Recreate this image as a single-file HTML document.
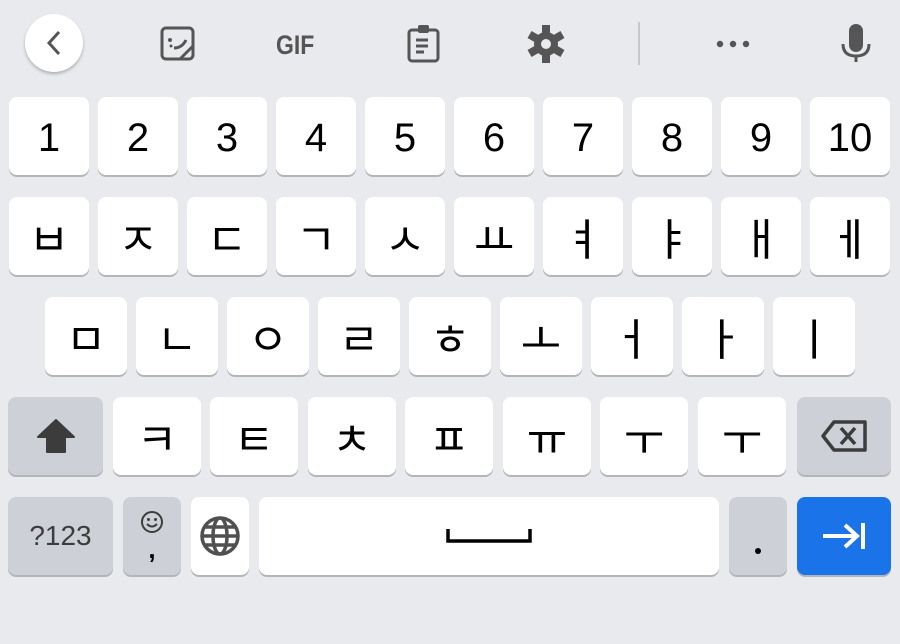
<!DOCTYPE html>
<html><head><meta charset="utf-8"><style>
body{margin:0;width:900px;height:644px;background:#e8eaed;position:relative;overflow:hidden;font-family:"Liberation Sans","Noto Sans CJK KR",sans-serif}
.k{position:absolute;background:#fff;border-radius:8px;box-shadow:0 2px 0 #b3b5ba;display:flex;align-items:center;justify-content:center;color:#000;height:78px}
.g{background:#cdd0d6}
.n{font-size:40px;top:97px;width:80px;padding-top:5px;box-sizing:border-box}
.h{font-size:44px;font-family:"Noto Sans CJK KR",sans-serif}
.ic{position:absolute}
</style></head><body>
<div class="ic" style="left:25px;top:14px;width:58px;height:58px;border-radius:50%;background:#fff;box-shadow:0 2px 3px rgba(0,0,0,.25)"></div>
<svg class="ic" style="left:0;top:0" width="900" height="90">
<path d="M59 32 L49 43 L59 54" fill="none" stroke="#555" stroke-width="3"/>
<rect x="162" y="28" width="31" height="31" rx="4" fill="none" stroke="#555" stroke-width="3"/>
<path d="M180 59 L193 46" stroke="#555" stroke-width="3"/>
<circle cx="170" cy="40" r="2" fill="#555"/><circle cx="171" cy="46" r="1.5" fill="#555"/>
<path d="M174 48 Q182 48 186 40" fill="none" stroke="#555" stroke-width="3"/>
<text x="0" y="0" transform="translate(276,54) scale(0.85,1)" font-family="Liberation Sans" font-weight="bold" font-size="27" fill="#555">GIF</text>
<rect x="409" y="30" width="29" height="31" rx="3" fill="none" stroke="#555" stroke-width="3"/>
<rect x="418" y="25" width="11" height="8" rx="2" fill="#555"/>
<path d="M416 40h12M416 46h12M416 52h8" stroke="#555" stroke-width="3"/>
<g transform="translate(546,44)" fill="#555"><circle r="12"/>
<rect x="-4" y="-19" width="8" height="38"/><rect x="-4" y="-19" width="8" height="38" transform="rotate(60)"/><rect x="-4" y="-19" width="8" height="38" transform="rotate(120)"/>
<circle r="5" fill="#e8eaed"/></g>
<line x1="639" y1="22" x2="639" y2="65" stroke="#c5c7cb" stroke-width="2"/>
<circle cx="720" cy="44" r="3.2" fill="#555"/><circle cx="733" cy="44" r="3.2" fill="#555"/><circle cx="746" cy="44" r="3.2" fill="#555"/>
<rect x="849" y="24" width="14" height="28" rx="7" fill="#555"/>
<path d="M843 44 Q843 56 856 56 Q869 56 869 44 M856 56 V62" fill="none" stroke="#555" stroke-width="3"/>
</svg>
<div class="k n" style="left:9px">1</div><div class="k n" style="left:98px">2</div><div class="k n" style="left:187px">3</div><div class="k n" style="left:276px">4</div><div class="k n" style="left:365px">5</div><div class="k n" style="left:454px">6</div><div class="k n" style="left:543px">7</div><div class="k n" style="left:632px">8</div><div class="k n" style="left:721px">9</div><div class="k n" style="left:810px">10</div>
<div class="k h" style="top:197px;left:9px;width:80px">ㅂ</div><div class="k h" style="top:197px;left:98px;width:80px">ㅈ</div><div class="k h" style="top:197px;left:187px;width:80px">ㄷ</div><div class="k h" style="top:197px;left:276px;width:80px">ㄱ</div><div class="k h" style="top:197px;left:365px;width:80px">ㅅ</div><div class="k h" style="top:197px;left:454px;width:80px">ㅛ</div><div class="k h" style="top:197px;left:543px;width:80px">ㅕ</div><div class="k h" style="top:197px;left:632px;width:80px">ㅑ</div><div class="k h" style="top:197px;left:721px;width:80px">ㅐ</div><div class="k h" style="top:197px;left:810px;width:80px">ㅔ</div>
<div class="k h" style="top:297px;left:45px;width:82px">ㅁ</div><div class="k h" style="top:297px;left:136px;width:82px">ㄴ</div><div class="k h" style="top:297px;left:227px;width:82px">ㅇ</div><div class="k h" style="top:297px;left:318px;width:82px">ㄹ</div><div class="k h" style="top:297px;left:409px;width:82px">ㅎ</div><div class="k h" style="top:297px;left:500px;width:82px">ㅗ</div><div class="k h" style="top:297px;left:591px;width:82px">ㅓ</div><div class="k h" style="top:297px;left:682px;width:82px">ㅏ</div><div class="k h" style="top:297px;left:773px;width:82px">ㅣ</div>
<div class="k g" style="top:397px;left:8px;width:95px"><svg width="40" height="40" viewBox="0 0 40 40"><path d="M20 4 L38 21 H29 V36 H11 V21 H2 Z" fill="#3c3c3c" stroke="#3c3c3c" stroke-linejoin="round" stroke-width="2"/></svg></div>
<div class="k h" style="top:397px;left:113px;width:88px">ㅋ</div><div class="k h" style="top:397px;left:210px;width:88px">ㅌ</div><div class="k h" style="top:397px;left:308px;width:88px">ㅊ</div><div class="k h" style="top:397px;left:405px;width:88px">ㅍ</div><div class="k h" style="top:397px;left:503px;width:88px">ㅠ</div><div class="k h" style="top:397px;left:600px;width:88px">ㅜ</div><div class="k h" style="top:397px;left:698px;width:88px">ㅜ</div>
<div class="k g" style="top:397px;left:797px;width:94px"><svg width="50" height="40" viewBox="0 0 50 40"><path d="M15 6 H46 V34 H15 L4 20 Z" fill="none" stroke="#3c3c3c" stroke-width="3.5" stroke-linejoin="round"/><path d="M22 12 L36 28 M36 12 L22 28" stroke="#3c3c3c" stroke-width="3.5"/></svg></div>
<div class="k g" style="top:497px;left:8px;width:105px;font-size:28px;color:#3c3c3c">?123</div>
<div class="k g" style="top:497px;left:123px;width:58px;flex-direction:column"><svg width="24" height="24"><circle cx="12" cy="12" r="10" fill="none" stroke="#3c3c3c" stroke-width="2"/><circle cx="8.5" cy="9.5" r="1.5" fill="#3c3c3c"/><circle cx="15.5" cy="9.5" r="1.5" fill="#3c3c3c"/><path d="M7 14 Q12 19 17 14" fill="none" stroke="#3c3c3c" stroke-width="2"/></svg><div style="font-size:26px;font-weight:bold;line-height:26px;margin-top:2px">,</div></div>
<div class="k" style="top:497px;left:191px;width:58px"><svg width="42" height="42" viewBox="0 0 42 42" fill="none" stroke="#505050" stroke-width="3.5"><circle cx="21" cy="21" r="18"/><ellipse cx="21" cy="21" rx="7" ry="18"/><path d="M3 21H39M6 12H36M6 30H36"/></svg></div>
<div class="k" style="top:497px;left:259px;width:460px"><svg width="86" height="18"><path d="M2 2 V14 H84 V2" fill="none" stroke="#000" stroke-width="3.5"/></svg></div>
<div class="k g" style="top:497px;left:729px;width:58px"><div style="width:6px;height:6px;border-radius:50%;background:#000;margin-top:30px"></div></div>
<div class="k" style="top:497px;left:797px;width:94px;background:#1a73e8"><svg width="46" height="30"><path d="M2 15 H36 M24 4 L36 15 L24 26" fill="none" stroke="#fff" stroke-width="4"/><path d="M42 2 V28" stroke="#fff" stroke-width="4"/></svg></div>
</body></html>
